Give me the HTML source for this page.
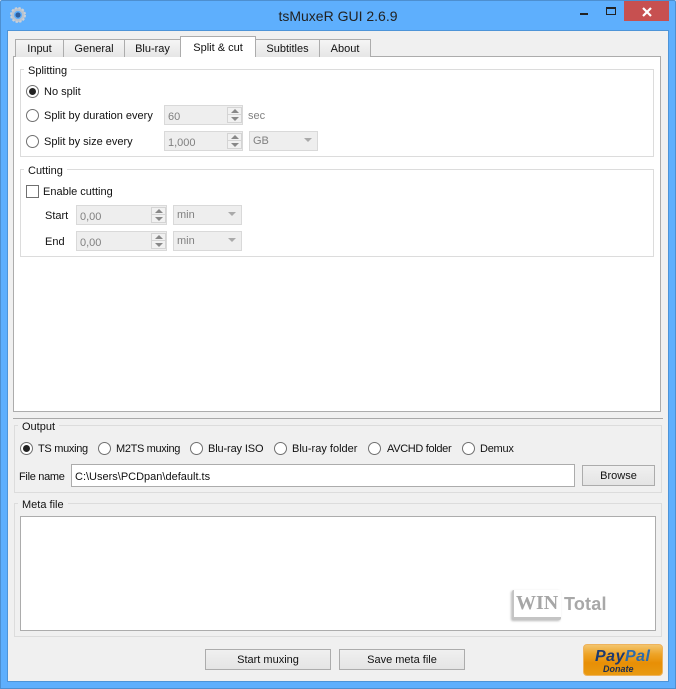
<!DOCTYPE html>
<html><head><meta charset="utf-8"><title>tsMuxeR GUI</title>
<style>
html,body{margin:0;padding:0;width:676px;height:689px;overflow:hidden;background:#fff}
#w{position:relative;width:676px;height:689px;overflow:hidden;font:11px/16px "Liberation Sans",sans-serif;color:#111}
#w div,#w span.t{position:absolute;box-sizing:border-box;white-space:nowrap}
.t{position:absolute;white-space:nowrap}
.tab{background:linear-gradient(#f5f5f5,#e6e6e6);border:1px solid #acacac;border-bottom:none;text-align:center;top:39px;height:18px;line-height:19px}
.gb{border:1px solid #dcdcdc}
.gt{padding:0 4px;height:14px;line-height:17px}
.r{width:13px;height:13px;border:1px solid #707070;border-radius:50%;background:#fff;margin-top:1px}
.r.on::after{content:"";position:absolute;left:2px;top:2px;width:7px;height:7px;border-radius:50%;background:#222}
.sp,.cb{background:#eee;border:1px solid #d9d9d9;height:20px;color:#808080;line-height:22px;padding-left:3px}
.cb{line-height:19px}
.sb{right:0;top:1px;width:15px;height:16px;border:1px solid #d4d4d4;background:#f1f1f1}
.sb::after{content:"";position:absolute;left:0;right:0;top:6px;height:1px;background:#d4d4d4}
.au{left:3px;top:1px;width:0;height:0;border:4px solid transparent;border-top:none;border-bottom:4px solid #888}
.ad{left:3px;top:9px;width:0;height:0;border:4px solid transparent;border-bottom:none;border-top:4px solid #888}
.ar{right:5px;top:6px;width:0;height:0;border:4px solid transparent;border-bottom:none;border-top:4px solid #aaa}
.btn{background:linear-gradient(#f0f0f0,#e4e4e4);border:1px solid #acacac;text-align:center;line-height:21px}
</style></head>
<body><div id="w">
<div style="left:0;top:0;width:676px;height:689px;background:#5eaffd;border:1px solid #4d8fd0;border-radius:2px 2px 0 0"></div>
<div style="left:624px;top:1px;width:45px;height:20px;background:#c75050"></div>
<svg style="position:absolute;left:640px;top:6px" width="14" height="12"><path d="M3 2L11 10M11 2L3 10" stroke="#fff" stroke-width="2.2"/></svg>
<div style="left:580px;top:13px;width:8px;height:2px;background:#222"></div>
<div style="left:606px;top:7px;width:10px;height:8px;border:1px solid #222;border-top-width:2px"></div>
<svg style="position:absolute;left:10px;top:7px" width="16" height="16" viewBox="0 0 16 16"><circle cx="8" cy="8" r="5.6" fill="none" stroke="#b9c3cf" stroke-width="3"/><circle cx="8" cy="8" r="7" fill="none" stroke="#c9d0d8" stroke-width="2" stroke-dasharray="2.2 1.5"/><circle cx="8" cy="8" r="2.6" fill="#2f5f9e"/></svg>
<span class="t" style="left:0;width:676px;text-align:center;top:8px;font-size:14px;line-height:16px;color:#222">tsMuxeR GUI 2.6.9</span>

<div style="left:7px;top:30px;width:662px;height:652px;background:#f0f0f0;border:1px solid #4d94d8"></div>

<div style="left:13px;top:56px;width:648px;height:356px;background:#fff;border:1px solid #acacac"></div>
<div class="tab" style="left:15px;width:49px">Input</div>
<div class="tab" style="left:63px;width:62px">General</div>
<div class="tab" style="left:124px;width:57px">Blu-ray</div>
<div class="tab" style="left:255px;width:65px">Subtitles</div>
<div class="tab" style="left:319px;width:52px">About</div>
<div class="tab" style="left:180px;width:76px;top:36px;height:21px;background:#fff;line-height:22px">Split &amp; cut</div>

<div class="gb" style="left:20px;top:69px;width:634px;height:88px"></div>
<div class="gt" style="left:24px;top:63px;background:#fff">Splitting</div>
<div class="r on" style="left:26px;top:84px"></div><span class="t" style="left:44px;top:84px">No split</span>
<div class="r" style="left:26px;top:108px"></div><span class="t" style="left:44px;top:108px">Split by duration every</span>
<div class="sp" style="left:164px;top:105px;width:79px">60<div class="sb"><div class="au"></div><div class="ad"></div></div></div>
<span class="t" style="left:248px;top:108px;color:#808080">sec</span>
<div class="r" style="left:26px;top:134px"></div><span class="t" style="left:44px;top:134px">Split by size every</span>
<div class="sp" style="left:164px;top:131px;width:79px">1,000<div class="sb"><div class="au"></div><div class="ad"></div></div></div>
<div class="cb" style="left:249px;top:131px;width:69px">GB<div class="ar"></div></div>

<div class="gb" style="left:20px;top:169px;width:634px;height:88px"></div>
<div class="gt" style="left:24px;top:163px;background:#fff">Cutting</div>
<div style="left:26px;top:185px;width:13px;height:13px;border:1px solid #707070;background:#fff"></div>
<span class="t" style="left:43px;top:184px">Enable cutting</span>
<span class="t" style="left:45px;top:208px">Start</span>
<div class="sp" style="left:76px;top:205px;width:91px">0,00<div class="sb"><div class="au"></div><div class="ad"></div></div></div>
<div class="cb" style="left:173px;top:205px;width:69px">min<div class="ar"></div></div>
<span class="t" style="left:45px;top:234px">End</span>
<div class="sp" style="left:76px;top:231px;width:91px">0,00<div class="sb"><div class="au"></div><div class="ad"></div></div></div>
<div class="cb" style="left:173px;top:231px;width:69px">min<div class="ar"></div></div>

<div style="left:13px;top:418px;width:650px;height:1px;background:#a8a8a8"></div>

<div class="gb" style="left:14px;top:425px;width:648px;height:68px"></div>
<div class="gt" style="left:18px;top:419px;background:#f0f0f0">Output</div>
<div class="r on" style="left:20px;top:441px"></div><span class="t" style="left:38px;top:441px;letter-spacing:-.3px">TS muxing</span>
<div class="r" style="left:98px;top:441px"></div><span class="t" style="left:116px;top:441px;letter-spacing:-.35px">M2TS muxing</span>
<div class="r" style="left:190px;top:441px"></div><span class="t" style="left:208px;top:441px;letter-spacing:-.13px">Blu-ray ISO</span>
<div class="r" style="left:274px;top:441px"></div><span class="t" style="left:292px;top:441px">Blu-ray folder</span>
<div class="r" style="left:368px;top:441px"></div><span class="t" style="left:387px;top:441px;letter-spacing:-.33px">AVCHD folder</span>
<div class="r" style="left:462px;top:441px"></div><span class="t" style="left:480px;top:441px;letter-spacing:-.25px">Demux</span>
<span class="t" style="left:19px;top:469px;letter-spacing:-.3px">File name</span>
<div style="left:71px;top:464px;width:504px;height:23px;background:#fff;border:1px solid #acacac;padding-left:3px;line-height:24px">C:\Users\PCDpan\default.ts</div>
<div class="btn" style="left:582px;top:465px;width:73px;height:21px">Browse</div>

<div class="gb" style="left:14px;top:503px;width:648px;height:134px"></div>
<div class="gt" style="left:18px;top:497px;background:#f0f0f0">Meta file</div>
<div style="left:20px;top:516px;width:636px;height:115px;background:#fff;border:1px solid #acacac"></div>

<div style="left:512px;top:590px;width:49px;height:30px;background:#fff;border-left:2px solid #c4c4c4;border-bottom:3px solid #c4c4c4;border-radius:2px;box-shadow:-1px 1px 2px #bbb"></div>
<span class="t" style="left:516px;top:592px;font:bold 20px/22px 'Liberation Serif',serif;color:#a6a6a6">WIN</span>
<span class="t" style="left:564px;top:594px;font:bold 18px/20px 'Liberation Sans',sans-serif;letter-spacing:.2px;color:#a8a8a8">Total</span>

<div class="btn" style="left:205px;top:649px;width:126px;height:21px">Start muxing</div>
<div class="btn" style="left:339px;top:649px;width:126px;height:21px">Save meta file</div>

<div style="left:583px;top:644px;width:80px;height:32px;border:1px solid #eeb35c;border-radius:4px;background:linear-gradient(#f3c56e 0,#eea428 30%,#e88f05 60%,#e99a12 100%)"></div>
<span class="t" style="left:595px;top:648px;font:italic bold 16px/18px 'Liberation Sans',sans-serif;letter-spacing:.5px;color:#1d3a70">Pay<span style="color:#2d6bab">Pal</span></span>
<span class="t" style="left:603px;top:664px;font:italic bold 9px/10px 'Liberation Sans',sans-serif;color:#1d2f50">Donate</span>
</div></body></html>
